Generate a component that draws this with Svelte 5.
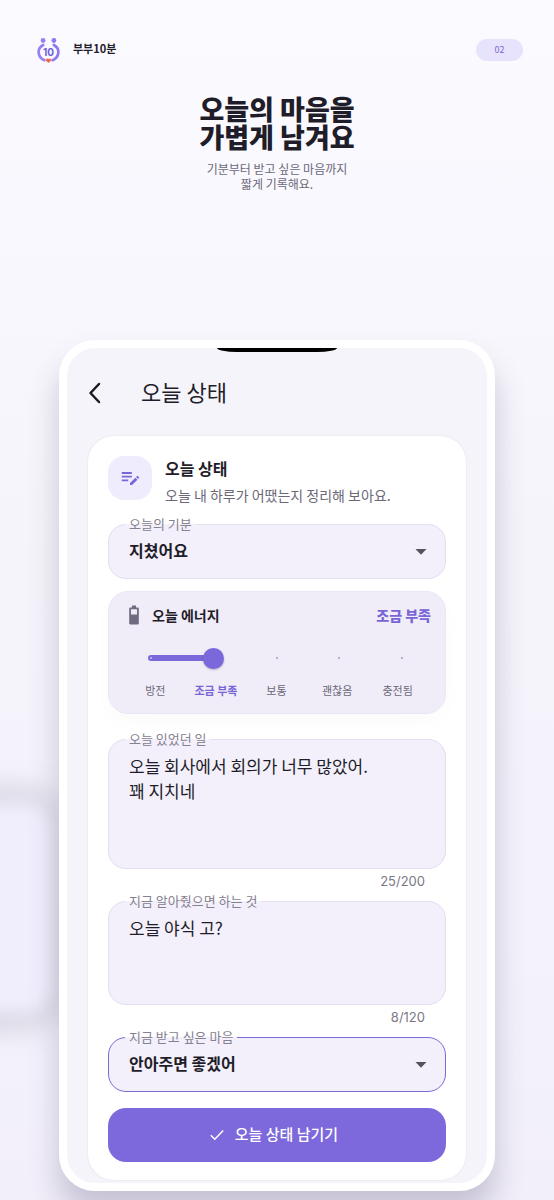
<script lang="ts">
    const moods = ['지쳤어요', '평온해요', '행복해요', '속상해요'];
    const wishes = ['안아주면 좋겠어', '들어주면 좋겠어', '혼자 쉬고 싶어'];
    const levels = ['방전', '조금 부족', '보통', '괜찮음', '충전됨'];

    let mood = $state('지쳤어요');
    let energy = $state(1);
    let today = $state('오늘 회사에서 회의가 너무 많았어.\n꽤 지치네');
    let hope = $state('오늘 야식 고?');
    let wish = $state('안아주면 좋겠어');

    let fillWidth = $derived((energy / (levels.length - 1)) * 100);
</script>

<div class="page">
    <div class="ghost"></div>

    <header class="brand-row">
        <svg class="logo" width="25" height="25" viewBox="0 0 25 25" fill="none">
            <circle cx="7.1" cy="2.5" r="2.4" fill="#9a80f5" />
            <circle cx="17.900" cy="2.5" r="2.4" fill="#8f78f0" />
            <path d="M7.200 7C4.400 8.500 2.600 10.900 2.600 13.800c0 3.900 2.400 7 5.800 8.400" stroke="#9a80f5" stroke-width="2.700" stroke-linecap="round" />
            <path d="M17.800 7c2.800 1.500 4.600 3.900 4.600 6.800 0 3.900-2.400 7-5.800 8.400" stroke="#8f78f0" stroke-width="2.700" stroke-linecap="round" />
            <path d="M12.500 25l-2.400-2.300c-1.400-1.600.9-3.300 2.400-1.600 1.500-1.700 3.800 0 2.400 1.600z" fill="#f4694c" />
            <text x="12.500" y="17.500" text-anchor="middle">10</text>
        </svg>
        <span class="brand">부부10분</span>
        <span class="step">02</span>
    </header>

    <h1>오늘의 마음을<br />가볍게 남겨요</h1>
    <p class="lead">기분부터 받고 싶은 마음까지<br />짧게 기록해요.</p>

    <main class="phone">
        <div class="notch"></div>

        <div class="app-bar">
            <button class="back-btn" aria-label="뒤로 가기">
                <svg width="14" height="22" viewBox="0 0 14 22" fill="none" stroke="#1d1b22" stroke-width="2.500" stroke-linecap="round" stroke-linejoin="round">
                    <polyline points="11 2 2.500 11 11 20"></polyline>
                </svg>
            </button>
            <h2>오늘 상태</h2>
        </div>

        <section class="card">
            <div class="card-head">
                <div class="head-icon">
                    <svg width="22" height="22" viewBox="0 0 24 24" fill="#7a66d8">
                        <path d="M3 5.500h11v2H3zM3 9.500h11v2H3zM3 13.500h7v2H3z" />
                        <path d="M12 17.500l5.900-5.900 2.200 2.200-5.900 5.900H12zM18.600 10.900l.8-.8c.4-.4 1-.4 1.400 0l.8.8c.4.4.4 1 0 1.400l-.8.8z" />
                    </svg>
                </div>
                <div>
                    <h3>오늘 상태</h3>
                    <p>오늘 내 하루가 어땠는지 정리해 보아요.</p>
                </div>
            </div>

            <fieldset class="field">
                <legend><label for="mood">오늘의 기분</label></legend>
                <div class="select-wrap">
                    <select id="mood" bind:value={mood}>
                        {#each moods as item}
                            <option>{item}</option>
                        {/each}
                    </select>
                    <svg class="arrow" width="12" height="6" viewBox="0 0 12 6"><path d="M0.500 0h11L6 5.800z" fill="#56535c" /></svg>
                </div>
            </fieldset>

            <div class="energy">
                <div class="energy-head">
                    <svg width="10" height="20" viewBox="0 0 10 20">
                        <path d="M3 0.500h4V2.500h1.600c.8 0 1.200.5 1.200 1.200v14.600c0 .8-.5 1.200-1.200 1.200H1.400c-.8 0-1.200-.5-1.200-1.200V3.700c0-.8.5-1.200 1.200-1.200H3zM2 4.300v5.200h6V4.300z" fill="#716b80" fill-rule="evenodd" />
                    </svg>
                    <label for="energy">오늘 에너지</label>
                    <strong>{levels[energy]}</strong>
                </div>
                <div class="slider">
                    <div class="rail">
                        <div class="fill" style="width: {fillWidth}%"></div>
                        {#each levels as _, i}
                            <i class:on={i < energy}></i>
                        {/each}
                    </div>
                    <input id="energy" type="range" min="0" max="4" step="1" bind:value={energy} />
                </div>
                <div class="levels">
                    {#each levels as level, i}
                        <span class:active={i === energy}>{level}</span>
                    {/each}
                </div>
            </div>

            <fieldset class="field">
                <legend><label for="today">오늘 있었던 일</label></legend>
                <textarea id="today" class="tall" maxlength="200" bind:value={today}></textarea>
            </fieldset>
            <div class="counter">{today.length}/200</div>

            <fieldset class="field">
                <legend><label for="hope">지금 알아줬으면 하는 것</label></legend>
                <textarea id="hope" maxlength="120" bind:value={hope}></textarea>
            </fieldset>
            <div class="counter">{hope.length}/120</div>

            <fieldset class="field focused">
                <legend><label for="wish">지금 받고 싶은 마음</label></legend>
                <div class="select-wrap">
                    <select id="wish" bind:value={wish}>
                        {#each wishes as item}
                            <option>{item}</option>
                        {/each}
                    </select>
                    <svg class="arrow" width="12" height="6" viewBox="0 0 12 6"><path d="M0.500 0h11L6 5.800z" fill="#56535c" /></svg>
                </div>
            </fieldset>

            <button class="submit-btn">
                <svg width="14" height="12" viewBox="0 0 14 12" fill="none" stroke="#fff" stroke-width="1.500">
                    <polyline points="0.800 6.200 4.800 10.200 13.200 1.500"></polyline>
                </svg>
                <span>오늘 상태 남기기</span>
            </button>
        </section>
    </main>
</div>

<style>
    :global(body) { background: #f3f0fa; }

    .page {
        position: relative;
        overflow: hidden;
        padding: 38px 0 9px;
        background: linear-gradient(#fbfaff 0%, #f9f8fe 18%, #f5f4fb 45%, #f4f3fc 75%, #f2effa 100%);
        font-family: "Noto Sans CJK KR", "Noto Sans", sans-serif;
        color: #1f1d29;
    }
    .page * { box-sizing: border-box; }
    h1, h2, h3, p { margin: 0; }
    button, select, textarea, input { font-family: inherit; color: inherit; }

    .ghost {
        position: absolute;
        left: -180px;
        bottom: 186px;
        width: 236px;
        height: 212px;
        border-radius: 30px;
        background: #f0eefd;
        box-shadow: 0 0 28px 6px rgba(90, 86, 105, 0.36);
        filter: blur(9px);
    }

    .brand-row { display: flex; align-items: center; height: 25px; padding: 0 31px 0 36px; }
    .logo text { font-family: Inter, sans-serif; font-size: 10px; font-weight: 700; fill: #6f5fdc; }
    .brand { margin-left: 12px; padding-bottom: 6px; font-size: 11px; line-height: 16px; font-weight: 700; }
    .step {
        margin: 0 0 2px auto;
        width: 47px;
        border-radius: 11px;
        background: #e8e3fd;
        color: #7c6bd0;
        font-size: 9px;
        line-height: 22px;
        text-align: center;
    }

    h1 { margin-top: 32px; font-size: 27px; line-height: 28px; font-weight: 900; text-align: center; }
    .lead { margin-top: 10px; font-size: 12px; line-height: 15px; text-align: center; color: #6b6878; }

    .phone {
        position: relative;
        margin: 149px 59px 0;
        border: 8px solid #fff;
        border-radius: 36px;
        padding-bottom: 3px;
        background: #f5f4fa;
        box-shadow: 0 22px 30px rgba(70, 60, 100, 0.26);
    }
    .notch {
        position: absolute;
        top: 0;
        left: 50%;
        width: 120px;
        height: 4px;
        margin-left: -60px;
        border-radius: 0 0 20px 20px / 0 0 4px 4px;
        background: #000;
    }

    .app-bar { display: flex; align-items: center; gap: 39px; height: 88px; padding: 2px 22px 0 21px; }
    .back-btn { display: flex; padding: 0; border: none; background: none; cursor: pointer; }
    h2 { padding-bottom: 4px; font-size: 22px; line-height: 32px; font-weight: 400; }

    .card {
        margin: 0 21px;
        padding: 20px 20px 18px;
        border-radius: 26px;
        background: #fff;
        box-shadow: 0 0 2px rgba(60, 50, 90, 0.12);
    }
    .card-head { display: flex; gap: 13px; height: 60px; }
    .head-icon {
        display: flex;
        align-items: center;
        justify-content: center;
        width: 44px;
        height: 44px;
        border-radius: 16px;
        background: #efecfd;
    }
    h3 { font-size: 16px; line-height: 24px; font-weight: 700; }
    .card-head p { font-size: 14px; line-height: 30px; color: #6b6878; }

    .field {
        min-width: 0;
        margin: 0;
        padding: 0;
        border: 1px solid #e4dff0;
        border-radius: 18px;
        background: #f3f0fb;
    }
    .field.focused { border-color: #7d6ad6; }
    legend { margin-left: 16px; padding: 0 4px; font-size: 13px; line-height: 16px; color: #85818f; }
    legend label { display: block; }
    .select-wrap { position: relative; padding-bottom: 10px; }
    select {
        display: block;
        width: 100%;
        height: 36px;
        padding: 0 40px 0 20px;
        border: none;
        outline: none;
        appearance: none;
        background: none;
        font-size: 16px;
        font-weight: 700;
    }
    .arrow { position: absolute; right: 18px; top: 17px; pointer-events: none; }
    textarea {
        display: block;
        width: 100%;
        height: 95px;
        padding: 6px 20px;
        border: none;
        outline: none;
        resize: none;
        background: none;
        font-size: 17px;
        line-height: 25px;
        overflow: hidden;
    }
    textarea.tall { height: 121px; }
    .counter { padding-right: 21px; font-family: Inter, sans-serif; font-size: 13px; line-height: 24px; text-align: right; color: #7b7884; }

    .energy {
        margin: 12px 0 17px;
        padding: 13px 14px 14px 13px;
        border: 1px solid #ebe7f5;
        border-radius: 20px;
        background: #f0ecf8;
        box-shadow: 0 8px 20px rgba(60, 50, 90, 0.02);
    }
    .energy-head { display: flex; align-items: center; height: 20px; padding-left: 7px; font-size: 14px; font-weight: 700; }
    .energy-head label { margin-left: 13px; }
    .energy-head strong { margin-left: auto; color: #7865d6; }
    .slider { position: relative; margin: 21px 18px 0; height: 24px; }
    .rail { display: flex; align-items: center; justify-content: space-between; position: absolute; top: 9px; left: 10px; right: 10px; height: 6px; }
    .rail i { position: relative; width: 2px; height: 2px; border-radius: 1px; background: #a49eb4; }
    .rail i.on { background: #c9bff5; }
    .fill { position: absolute; left: 0; top: 0; height: 6px; border-radius: 3px; background: #7b68da; box-shadow: -2px 0 #7b68da; }
    .slider input { position: relative; display: block; width: 100%; height: 24px; margin: 0; appearance: none; background: none; }
    .slider input::-webkit-slider-thumb {
        appearance: none;
        width: 21px;
        height: 21px;
        border-radius: 50%;
        background: #7b68da;
        box-shadow: 0 1px 2px rgba(40, 30, 80, 0.3);
    }
    .levels { display: grid; grid-template-columns: repeat(5, 1fr); margin: 11px 3px 0; }
    .levels span { font-size: 11px; line-height: 18px; text-align: center; color: #6b6878; }
    .levels .active { color: #7865d6; font-weight: 700; }

    .submit-btn {
        display: flex;
        align-items: center;
        justify-content: center;
        gap: 11px;
        width: 100%;
        height: 54px;
        margin-top: 16px;
        padding: 0 6px 0 0;
        border: none;
        border-radius: 18px;
        background: #7d69dc;
        color: #fff;
        font-size: 15px;
        font-weight: 500;
        cursor: pointer;
    }
    .submit-btn span { padding-bottom: 3px; }
</style>
